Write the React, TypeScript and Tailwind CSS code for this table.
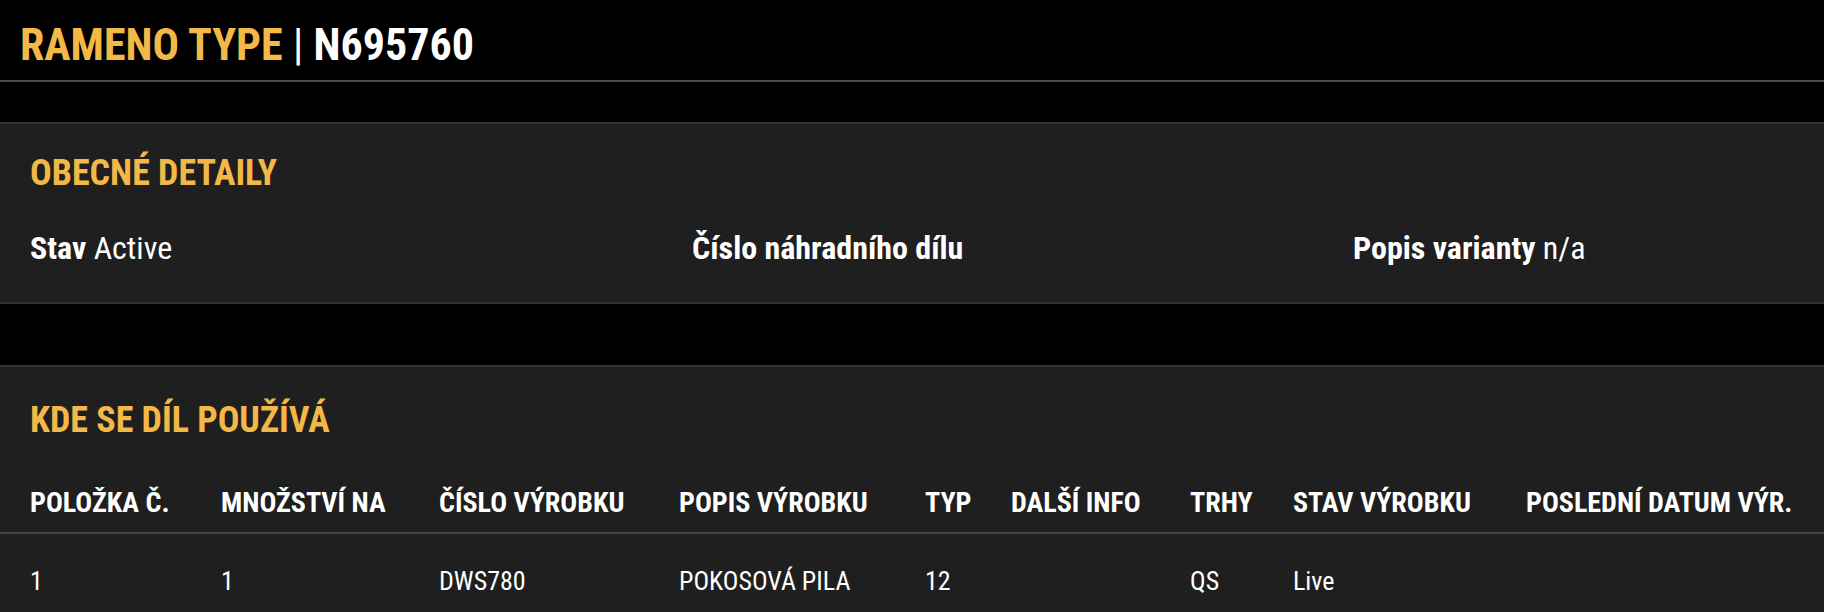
const columns = [
  "Položka č.",
  "Množství na",
  "Číslo výrobku",
  "Popis výrobku",
  "Typ",
  "Další info",
  "Trhy",
  "Stav výrobku",
  "Poslední datum výr.",
];

const ROWS = [
  {
    id: 1,
    cells: ["1", "1", "DWS780", "POKOSOVÁ PILA", "12", "", "QS", "Live", ""],
  },
];

function App() {
  return (
    <div className="min-h-screen w-full bg-black text-white font-['Roboto_Condensed',Roboto,sans-serif] font-stretch-condensed">
      <header className="pt-[23px] pb-[13px] pl-5 border-b-2 border-[#4a4a4a]">
        <h1 className="text-[44px] leading-none font-bold uppercase">
          <span className="text-[#f3b847]">Rameno Type</span>
          <span className="font-normal"> | </span>
          <span>N695760</span>
        </h1>
      </header>

      <section className="mt-10 bg-[#1f1f1f] border-y-2 border-[#333333] px-[30px] pt-[31px] pb-[38px]">
        <h2 className="text-[36px] leading-none font-bold uppercase text-[#f3b847]">
          Obecné detaily
        </h2>
        <div className="mt-[41px] grid grid-cols-[662px_661px_1fr] text-[32px] leading-none">
          <div>
            <span className="font-bold">Stav</span> Active
          </div>
          <div>
            <span className="font-bold">Číslo náhradního dílu</span>
          </div>
          <div>
            <span className="font-bold">Popis varianty</span> n/a
          </div>
        </div>
      </section>

      <section className="mt-[61px] bg-[#1f1f1f] border-t-2 border-[#333333] pt-[35px]">
        <h2 className="px-[30px] text-[36px] leading-none font-bold uppercase text-[#f3b847]">
          Kde se díl používá
        </h2>
        <div className="mt-[51px] grid grid-cols-[191px_218px_240px_246px_86px_179px_103px_233px_1fr] pl-[30px] pb-[15px] border-b-2 border-[#444444] text-[28px] leading-none font-bold uppercase">
          {columns.map((c) => (
            <div key={c} className="whitespace-nowrap">{c}</div>
          ))}
        </div>
        {ROWS.map((row) => (
          <div
            key={row.id}
            className="grid grid-cols-[191px_218px_240px_246px_86px_179px_103px_233px_1fr] pl-[30px] pt-[34px] pb-6 text-[26px] leading-none"
          >
            {row.cells.map((c, i) => (
              <div key={i} className="whitespace-nowrap">{c}</div>
            ))}
          </div>
        ))}
      </section>
    </div>
  );
}

export default App;
